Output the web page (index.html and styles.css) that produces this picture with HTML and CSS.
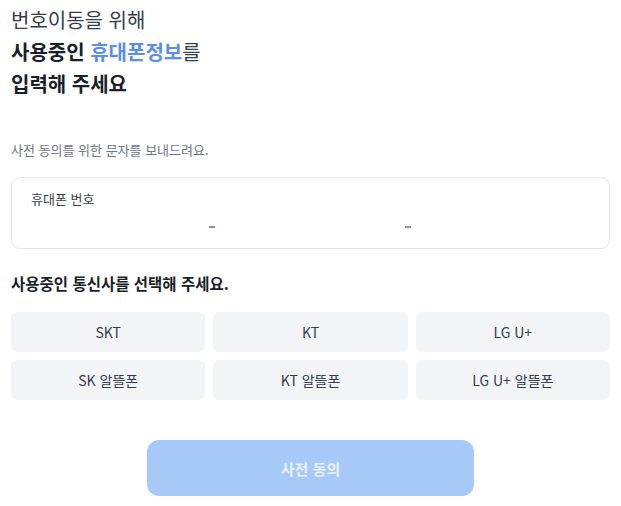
FILE: index.html
```html
<!DOCTYPE html>
<html lang="ko">
<head>
<meta charset="utf-8">
<link rel="stylesheet" href="styles.css">
</head>
<body>
<main class="page">
  <h1 class="title">
    <span class="title-light">번호이동을 위해</span>
    <span class="title-bold">사용중인 <em class="accent">휴대폰정보</em><span class="title-light">를</span></span>
    <span class="title-bold">입력해 주세요</span>
  </h1>
  <p class="subtitle">사전 동의를 위한 문자를 보내드려요.</p>
  <div class="phone-box">
    <div class="phone-label">휴대폰 번호</div>
    <div class="phone-fields">
      <span class="field"></span>
      <span class="dash"></span>
      <span class="field"></span>
      <span class="dash"></span>
      <span class="field"></span>
    </div>
  </div>
  <h2 class="section-title">사용중인 통신사를 선택해 주세요.</h2>
  <div class="carriers">
    <button class="carrier">SKT</button>
    <button class="carrier">KT</button>
    <button class="carrier">LG U+</button>
    <button class="carrier">SK 알뜰폰</button>
    <button class="carrier">KT 알뜰폰</button>
    <button class="carrier">LG U+ 알뜰폰</button>
  </div>
  <div class="submit-wrap">
    <button class="submit">사전 동의</button>
  </div>
</main>
</body>
</html>
```

FILE: styles.css
```css
* { box-sizing: border-box; }
html, body { margin: 0; padding: 0; background: #fff; }
body {
  font-family: "Noto Sans CJK KR", "Noto Sans", sans-serif;
  color: #191f28;
}
.page {
  padding: 4px 11px 0 11px;
  display: flex;
  flex-direction: column;
}
.title {
  margin: 0;
  font-size: 20px;
  line-height: 32px;
  font-weight: 700;
  display: flex;
  flex-direction: column;
  color: #191f28;
}
.title-light { font-weight: 400; color: #333d4b; }
.accent { font-style: normal; color: #5a8def; }
.subtitle {
  margin: 41px 0 0 0;
  font-size: 13px;
  line-height: 18px;
  color: #6b7684;
}
.phone-box {
  margin-top: 18px;
  border: 1px solid #e5e8eb;
  border-radius: 9px;
  padding: 11px 19px 12px 19px;
  height: 72px;
}
.phone-label {
  font-size: 13px;
  line-height: 20px;
  color: #333d4b;
}
.phone-fields {
  margin-top: 10px;
  display: grid;
  grid-template-columns: 178px auto 190px auto 1fr;
  align-items: center;
  height: 16px;
}
.dash {
  width: 6px;
  height: 1.5px;
  background: #8b95a1;
}
.section-title {
  margin: 22px 0 0 0;
  font-size: 15.5px;
  line-height: 24px;
  font-weight: 700;
  color: #191f28;
}
.carriers {
  margin-top: 17px;
  display: grid;
  grid-template-columns: repeat(3, 1fr);
  gap: 8px 8px;
}
.carrier {
  height: 40px;
  border: none;
  border-radius: 6px;
  background: #f2f4f6;
  font-family: inherit;
  font-size: 14px;
  color: #333d4b;
  padding: 0;
}
.submit-wrap {
  display: flex;
  justify-content: center;
  margin-top: 40px;
}
.submit {
  width: 327px;
  height: 56px;
  border: none;
  border-radius: 12px;
  background: #a6c9f7;
  color: #eaf2fd;
  font-family: inherit;
  font-size: 15px;
  font-weight: 700;
}
```
